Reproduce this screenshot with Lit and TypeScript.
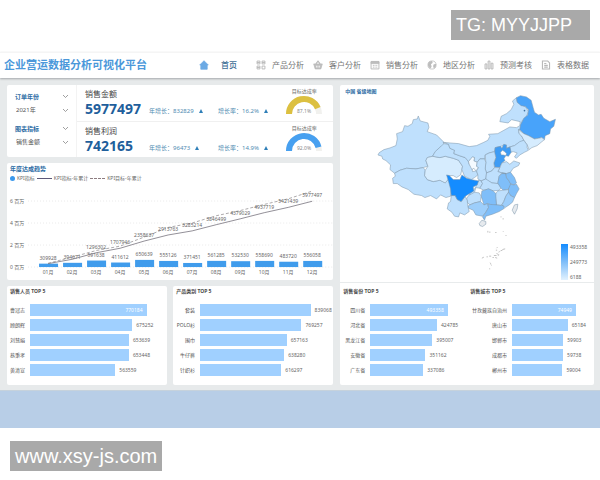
import { LitElement, html, svg, css } from "lit";
import { customElement, property } from "lit/decorators.js";

const shared = css`
  * { box-sizing: border-box; }
  h1, h2, p, ul, figure { margin: 0; padding: 0; }
  svg { display: block; }
`;

type Row = [string, number];

/* ---------- ranked horizontal bars ---------- */
@customElement("rank-bars")
export class RankBars extends LitElement {
  @property() heading = "";
  @property({ attribute: false }) rows: Row[] = [];
  @property({ type: Number }) fill = 85;
  @property({ type: Number }) labelWidth = 18;
  @property({ type: Boolean }) inside = false;

  static styles = [shared, css`
    :host { display: block; padding: 2px 0 8px; }
    h2 { font-size: 5px; line-height: 6px; font-weight: 700; color: #4a4a4a; padding-left: 3px; }
    table { width: 100%; border-collapse: collapse; margin-top: 8px; table-layout: fixed; }
    th, td { padding: 0; height: 15px; vertical-align: middle; }
    th { font-size: 5px; font-weight: 400; color: #555; text-align: right; white-space: nowrap; }
    td { padding-left: 5px; }
    .track { display: flex; align-items: center; gap: 4px; }
    .bar { height: 12px; background: #a0d0ff; flex: none; display: flex; align-items: center; justify-content: flex-end; padding-right: 4px; }
    .value { font-size: 5px; color: #666; }
    .light { color: #fff; }
  `];

  render() {
    const max = this.rows[0][1];
    return html`<h2>${this.heading}</h2>
      <table>
        <colgroup><col style="width:${this.labelWidth}px" /><col /></colgroup>
        ${this.rows.map(([name, value], i) => {
          const within = this.inside && i === 0;
          return html`<tr>
            <th scope="row">${name}</th>
            <td><div class="track">
              <div class="bar" style="width:${(value / max) * this.fill}%">
                ${within ? html`<span class="value light">${value}</span>` : ""}
              </div>
              ${within ? "" : html`<span class="value">${value}</span>`}
            </div></td>
          </tr>`;
        })}
      </table>`;
  }
}

/* ---------- semicircle gauge ---------- */
@customElement("rate-gauge")
export class RateGauge extends LitElement {
  @property({ type: Number }) rate = 0;
  @property() color = "#47a0f0";

  static styles = [shared, css`
    :host { display: block; width: 38px; text-align: center; font-size: 5px; line-height: 7px; color: #666; }
    svg { width: 38px; height: 22px; }
    text { font-size: 5px; fill: #888; }
  `];

  render() {
    const a = Math.PI * (1 - this.rate / 100);
    const x = 19 + 15 * Math.cos(a);
    const y = 19 - 15 * Math.sin(a);
    return html`<p>目标达成率</p>
      <svg viewBox="0 0 38 22">
        <path d="M4 19A15 15 0 0 1 34 19" fill="none" stroke="#f1f1ee" stroke-width="6" />
        <path d="M4 19A15 15 0 0 1 ${x} ${y}" fill="none" stroke=${this.color} stroke-width="6" />
        <text x="19" y="18" text-anchor="middle">${this.rate.toFixed(1)}%</text>
      </svg>`;
  }
}

/* ---------- yearly trend ---------- */
const MONTHLY = [309928, 384743, 591638, 411612, 650639, 555126, 371451, 561285, 532530, 558690, 483720, 556058];
const BAR_LABELS = ["309928", "394671", "591638", "411612", "650639", "555126", "371451", "561285", "532530", "558690", "483720", "556058"];
const TOTALS = [309928, 704671, 1296302, 1707946, 2358637, 2913763, 3285214, 3846499, 4379029, 4937719, 5421439, 5977497];
const TARGET = [340000, 900000, 1500000, 1900000, 2720000, 3600000, 4000000, 4660000, 5130000, 5690000, 6200000, 6900000];

@customElement("trend-chart")
export class TrendChart extends LitElement {
  static styles = [shared, css`
    :host { display: block; }
    h2 { font-size: 6px; line-height: 8px; color: #2a6ba3; padding: 2px 3px 0; }
    .legend { display: flex; align-items: center; gap: 2px; padding: 2px 3px 0; font-size: 5px; line-height: 7px; color: #666; }
    .dot { width: 5px; height: 5px; border-radius: 50%; background: #3a98ec; }
    .line { width: 15px; border-top: 1px solid #5c5878; }
    .dash { border-top: 1px dashed #8c7c80; }
    .plot { width: 100%; }
    text { font-size: 5px; fill: #666; }
  `];

  render() {
    const x = (i: number) => 41 + i * 24;
    const y = (v: number) => 85 - (v / 1e6) * 11;
    const path = (vs: number[]) => vs.map((v, i) => `${i ? "L" : "M"}${x(i)} ${y(v)}`).join("");
    return html`<h2>年度达成趋势</h2>
      <div class="legend">
        <span class="dot"></span><span>KPI指标</span>
        <span class="line"></span><span>KPI指标-年累计</span>
        <span class="line dash"></span><span>KPI目标-年累计</span>
      </div>
      <svg class="plot" viewBox="0 0 326 98">
        ${[6, 4, 2, 0].map((m) => svg`
          <text x="3" y=${y(m * 1e6) + 2}>${m} 百万</text>
          <path d="M21 ${y(m * 1e6)}H325" stroke="#dcdcdc" stroke-width=".6" stroke-dasharray="1 2" />`)}
        ${MONTHLY.map((v, i) => svg`
          <rect x=${x(i) - 9} y=${y(v)} width="19" height=${85 - y(v)} fill="#409cec" />
          <text x=${x(i)} y=${y(v) - 4} text-anchor="middle">${BAR_LABELS[i]}</text>
          <text x=${x(i)} y="92" text-anchor="middle">${String(i + 1).padStart(2, "0")}月</text>`)}
        <path d=${path(TOTALS)} fill="none" stroke="#77747e" stroke-width=".8" />
        <path d=${path(TARGET)} fill="none" stroke="#8a8588" stroke-width=".7" stroke-dasharray="3 2" />
        ${TOTALS.map((v, i) => i < 2 ? "" : svg`<text x=${x(i)} y=${y(v) - 4} text-anchor="middle">${v}</text>`)}
      </svg>`;
  }
}

/* ---------- province map ---------- */
const P = "#bfe0fd", L = "#d6ecfe", M = "#9dcefb", D = "#7fbef9";
const PROVINCES: [string, string][] = [
  [P, "114,228 118,221 132,212 150,207 168,200 172,180 170,164 188,158 194,140 204,142 217,134 220,122 232,120 235,111 241,126 264,132 267,145 262,158 290,168 310,188 312,200 300,205 286,218 278,232 262,236 258,245 264,262 250,266 228,270 200,268 180,274 164,283 150,272 152,258 138,245 128,240 126,232"],
  [P, "164,283 180,274 200,268 228,270 250,266 256,274 254,290 262,302 280,308 300,304 316,312 326,300 328,308 334,330 332,352 318,356 302,348 290,360 272,350 255,356 245,350 222,346 205,332 186,324 172,314 160,314 158,298 166,292"],
  [L, "262,236 278,232 300,236 316,232 340,238 356,244 368,262 366,272 362,288 350,296 340,290 326,290 326,300 316,312 300,304 280,308 262,302 254,290 256,274 264,262 258,245"],
  [P, "278,232 286,218 300,205 312,194 326,196 330,208 344,214 342,224 358,230 376,236 384,244 388,256 396,266 398,278 410,276 414,288 404,296 394,302 382,296 374,292 366,272 368,262 356,244 340,238 316,232 300,236"],
  [P, "310,190 330,192 356,194 388,203 410,200 432,190 444,184 450,172 446,166 474,164 492,154 510,144 530,146 540,140 541,128 515,122 505,132 480,128 484,112 500,104 514,92 522,76 518,66 530,56 532,68 545,78 558,84 566,98 560,112 548,124 544,138 540,152 536,152 538,164 546,172 552,184 540,190 524,200 510,204 500,208 492,198 484,202 466,206 464,218 448,222 436,228 434,240 420,240 412,250 402,246 404,236 398,234 386,248 376,236 358,230 342,224 344,214 330,208 326,196"],
  ["#f4faff", "392,240 398,234 404,236 402,246 412,250 410,262 416,266 408,276 402,268 396,272 388,256 386,248"],
  ["#48a3fa", "530,56 542,50 560,54 574,64 580,86 584,100 596,108 604,106 612,118 630,128 647,121 642,142 632,150 630,164 616,170 614,182 606,176 596,178 584,180 566,170 552,164 540,152 542,138 552,118 564,108 566,92 556,82 544,80 532,70"],
  [L, "536,152 552,164 566,170 584,180 596,178 606,176 614,182 604,190 592,200 576,206 568,212 562,198 552,184 546,172 538,164"],
  [P, "510,204 524,200 540,188 552,184 562,198 562,206 566,214 554,220 540,228 530,238 524,234 532,222 520,218 512,220"],
  ["#3e9cf5", "466,206 482,202 486,208 492,196 500,198 500,208 510,204 514,220 506,232 498,230 492,240 496,244 486,252 480,266 464,264 462,252 468,236 464,222"],
  ["#fff", "482,220 488,214 494,218 500,224 498,230 490,228 484,228"],
  [P, "436,228 448,222 464,218 468,236 462,252 464,266 456,276 440,282 436,270 438,250"],
  [P, "434,240 438,250 436,270 440,282 438,300 424,306 414,300 414,288 410,276 416,266 410,262 412,250 420,240"],
  [P, "480,266 486,252 500,248 510,256 522,246 540,252 536,260 520,268 512,280 500,284 486,282 474,278"],
  [P, "440,282 456,276 464,266 480,266 474,278 486,282 478,292 474,314 456,312 444,306 438,300"],
  [P, "416,304 424,306 428,314 420,328 408,326 404,340 396,352 388,346 400,336 410,320"],
  [P, "424,306 438,300 456,312 474,314 484,326 478,334 460,336 446,330 432,334 420,328 428,314"],
  [D, "478,292 486,284 498,284 500,296 508,306 514,318 506,332 490,334 482,326 474,312"],
  [D, "486,282 500,284 512,280 524,296 530,312 522,318 512,314 506,304 500,296 498,284"],
  [D, "512,316 522,318 530,316 538,330 530,344 524,356 512,350 506,340 506,330"],
  [P, "474,336 490,334 506,332 506,340 498,352 492,368 484,380 470,378 468,360 466,346"],
  [M, "506,340 512,350 524,356 518,370 508,378 496,386 486,378 492,368 498,352"],
  [D, "426,336 446,330 460,336 468,344 468,360 470,378 458,380 444,374 432,378 428,364 424,352"],
  [P, "386,350 404,340 418,342 424,352 422,368 404,372 390,378 382,370 380,360"],
  [M, "390,378 404,372 422,368 432,378 444,374 446,386 438,400 428,412 408,408 400,394 386,388 384,382"],
  [D, "446,386 444,376 470,378 490,380 494,388 478,398 458,406 438,412 434,424 428,414 438,400"],
  [P, "334,350 346,350 352,362 364,368 376,352 382,364 384,382 388,398 374,408 360,402 356,414 344,412 336,400 322,390 326,372 332,368"],
  ["#148cff", "320,288 328,290 340,302 360,302 366,288 380,298 394,302 416,306 412,318 400,324 402,336 386,346 376,352 364,368 352,362 346,350 334,350 332,330 326,308"],
  ["#e6eaee", "418,434 426,424 438,428 438,436 428,443 420,440"],
  ["#e6eaee", "524,378 534,376 532,390 524,406 517,394"],
];
const ISLETS = "M482 414h3M488 420h4M444 456v5M450 458v4M466 461h4M489 458h2M497 470h3M470 508l3-3M468 514h4M476 520l4-2M488 512l8-2M482 516l6-2M470 524l6 3M462 530h8M448 532h6M440 534h4M426 538l6-3M458 536h4M466 536l6 2M474 530l4-2M450 552l4 3M453 557l2 3M448 570h3";

@customElement("china-map")
export class ChinaMap extends LitElement {
  static styles = [shared, css`
    :host { display: block; position: relative; padding-top: 2px; }
    h2 { font-size: 5px; line-height: 8px; color: #2a6ba3; padding-left: 5px; }
    .map { width: 100%; }
    .scale { position: absolute; right: 6px; bottom: 1px; display: flex; gap: 2px; font-size: 5px; line-height: 6px; color: #666; }
    .ramp { width: 7px; height: 36px; background: linear-gradient(#148cff, #7fbef9 50%, #e2f2ff); }
    .ticks { display: flex; flex-direction: column; justify-content: space-between; width: 18px; }
  `];
  render() {
    return html`<h2>中国 省级地图</h2>
      <svg class="map" viewBox="0 48 762 558" role="img" aria-label="中国省级地图">
        <g stroke="#7f97ab" stroke-width="1.6" stroke-linejoin="round">
          ${PROVINCES.map(([f, pts]) => svg`<polygon fill=${f} points=${pts} />`)}
        </g>
        <circle cx="554" cy="95" r="2.5" fill="#3d6f9c" />
        <path d=${ISLETS} stroke="#999" stroke-width="1.8" fill="none" />
      </svg>
      <div class="scale">
        <div class="ramp"></div>
        <div class="ticks"><span>493358</span><span>249773</span><span>6188</span></div>
      </div>`;
  }
}

/* ---------- page ---------- */
const ICONS: Record<string, unknown> = {
  home: svg`<path fill="#6ba9e4" d="M7 1L13 7H11.500V13H2.500V7H1Z" stroke="#6ba9e4" stroke-linejoin="round"/>`,
  grid: svg`<path stroke-width="1.300" d="M1.500 1.500h4v4h-4zM8.500 1.500h4v4h-4zM1.500 8.500h4v4h-4zM8.500 8.500h4v4h-4zM1.500 3.500h4M8.500 3.500h4M1.500 10.500h4"/>`,
  basket: svg`<path fill="#c0c0c0" d="M1 5.500H13L11 12.500H3Z"/><path stroke-width="1.500" d="M4 5.500L7 1.500L10 5.500"/><path stroke="#fff" d="M5 8v2.500M7 8v2.500M9 8v2.500"/>`,
  calendar: svg`<path stroke-width="1.300" d="M1.500 2.500h11v10h-11z"/><path fill="#bdbdbd" d="M1.500 2h11v3h-11z"/><path stroke-width="1.300" d="M4 7.500h1.500M6.300 7.500h1.500M8.700 7.500h1.500M4 10h1.500M6.300 10h1.500M8.700 10h1.500"/>`,
  globe: svg`<circle cx="7" cy="7" r="5.700"/><path fill="#bdbdbd" stroke="none" d="M2 4Q4 1 7 1.500L8 4L5.500 6L6.500 9L5 12Q1 10 1.300 6ZM9.500 6L13 5.500Q13 10 9.500 12L8.500 8.500Z"/>`,
  bars: svg`<path stroke-width="1.400" d="M1.500 5.500h2.500v7h-2.500zM5.800 1.500h2.500v11h-2.500zM10 4.500h2.500v8h-2.500z"/>`,
  sheet: svg`<path stroke-width="1.500" d="M2 1.500h7.500l2.500 2.500v8.500h-10zM4.500 5h3M4.500 7.500h5M4.500 10h5"/>`,
};
const NAV: [string, string][] = [
  ["grid", "产品分析"], ["basket", "客户分析"], ["calendar", "销售分析"],
  ["globe", "地区分析"], ["bars", "预测考核"], ["sheet", "表格数据"],
];
const icon = (name: string) => html`<svg class="icon" viewBox="0 0 14 14" fill="none" stroke="#b8b8b8">${ICONS[name]}</svg>`;
const chevron = html`<svg class="chevron" viewBox="0 0 7 5" fill="none" stroke="#777" stroke-width=".7"><path d="M1 1L3.500 3.500L6 1" /></svg>`;

@customElement("app-root")
export class AppRoot extends LitElement {
  static styles = [shared, css`
    :host { display: block; background: #fff; color: #555; font-family: "Noto Sans", "Noto Sans CJK SC", sans-serif; }
    .mark { display: flex; width: fit-content; height: 30px; align-items: center; padding: 0 5px; background: #a9a9a9; color: #fff; font: 20px/30px "Liberation Sans", Arial, sans-serif; }
    .top { display: flex; justify-content: flex-end; padding: 10px 10px 12px; }
    .top .mark { font-size: 18px; width: 139px; }
    .foot { padding: 13px 10px 10px; }
    header { position: relative; display: flex; align-items: center; justify-content: space-between; height: 26px; padding: 0 11px 2px 4px; border-top: 1px solid #f5f5f5; background: #fff; box-shadow: 0 1px 2px #a4a8aa; }
    h1 { font-size: 11px; line-height: 16px; font-weight: 700; color: #4b98da; white-space: nowrap; }
    nav { display: flex; gap: 9px; }
    nav a { display: flex; align-items: center; gap: 6px; font-size: 8px; line-height: 12px; color: #757575; text-decoration: none; white-space: nowrap; }
    nav a.current { gap: 12px; color: #3f6f96; font-weight: 500; margin-right: 10px; }
    .icon { width: 10px; height: 10px; }
    main { display: grid; grid-template-columns: 9fr 7fr; gap: 7px; padding: 7px 6px 5px 7px; background: #e7eaeb; }
    .left { display: flex; flex-direction: column; gap: 6px; min-width: 0; }
    .panel { background: #fff; border-radius: 2px; min-width: 0; }
    .kpis { display: grid; grid-template-columns: 70px 1fr; }
    .filters { display: flex; flex-direction: column; padding: 4px 7px 0 8px; border-right: 1px solid #f3f3f3; }
    .filters label { display: flex; justify-content: space-between; align-items: center; height: 14px; font-size: 6px; font-weight: 700; color: #2a6ba3; }
    .pick { display: grid; align-items: center; height: 14px; margin-bottom: 4px; }
    .pick > * { grid-area: 1 / 1; }
    .pick .chevron { justify-self: end; }
    select { appearance: none; border: 0; background: none; padding: 0 1px; margin: 0; width: 100%; font: 6px/10px "Noto Sans", "Noto Sans CJK SC", sans-serif; color: #555; }
    .chevron { width: 7px; height: 5px; pointer-events: none; }
    .kpi { display: grid; grid-template-columns: 64px 69px 1fr 38px; height: 36px; padding: 3px 10px 0 8px; align-items: start; }
    .kpi + .kpi { border-top: 1px solid #f0f0f0; }
    .name { font-size: 8px; line-height: 12px; color: #444; }
    .total { font-size: 14px; line-height: 18px; font-weight: 700; color: #1f5f9c; }
    .growth { display: flex; align-items: center; gap: 5px; font-size: 6px; line-height: 8px; color: #4f8cb2; margin-top: 19px; white-space: nowrap; }
    .up { width: 4px; height: 4px; }
    .pair { display: grid; grid-template-columns: 1fr 1fr; gap: 6px; }
    .wide { display: flex; flex-direction: column; justify-content: space-between; }
    .regions { display: grid; grid-template-columns: 1fr 1fr; border-top: 1px solid #e8ebec; padding-top: 3px; }
    .strip { height: 38px; background: #b8cee7; border-top: 1px solid #c6d2dc; }
  `];

  kpi(name: string, total: number, inc: number, rate: string, done: number, color: string) {
    const up = html`<svg class="up" viewBox="0 0 4 4"><path d="M2 0L4 4H0Z" fill="#2f7fb8" /></svg>`;
    return html`<section class="kpi">
      <div><p class="name">${name}</p><p class="total">${total}</p></div>
      <p class="growth">年增长：${inc} ${up}</p>
      <p class="growth">增长率：${rate} ${up}</p>
      <rate-gauge .rate=${done} .color=${color}></rate-gauge>
    </section>`;
  }

  render() {
    return html`
      <div class="top"><div class="mark">TG: MYYJJPP</div></div>
      <header>
        <h1>企业营运数据分析可视化平台</h1>
        <nav>
          <a class="current" href="#home">${icon("home")}首页</a>
          ${NAV.map(([i, t]) => html`<a href="#${i}">${icon(i)}${t}</a>`)}
        </nav>
      </header>
      <main>
        <div class="left">
          <div class="panel kpis">
            <div class="filters">
              <label for="year">订单年份 ${chevron}</label>
              <div class="pick"><select id="year"><option>2021年</option></select>${chevron}</div>
              <label for="metric">图表指标 ${chevron}</label>
              <div class="pick"><select id="metric"><option>销售金额</option></select>${chevron}</div>
            </div>
            <div>
              ${this.kpi("销售金额", 5977497, 832829, "16.2%", 87.1, "#dcc040")}
              ${this.kpi("销售利润", 742165, 96473, "14.9%", 92, "#47a0f0")}
            </div>
          </div>
          <trend-chart class="panel"></trend-chart>
          <div class="pair">
            <rank-bars class="panel" heading="销售人员 TOP 5" inside .fill=${85} .rows=${[["曹冠志", 770184], ["顾朗辉", 675252], ["刘慧娟", 653639], ["蔡秉孝", 653448], ["黄清宣", 563559]]}></rank-bars>
            <rank-bars class="panel" heading="产品类别 TOP 5" .fill=${83} .labelWidth=${22} .rows=${[["套装", 839068], ["POLO衫", 769257], ["围巾", 657163], ["牛仔裤", 638280], ["针织衫", 616297]]}></rank-bars>
          </div>
        </div>
        <div class="panel wide">
          <china-map></china-map>
          <div class="regions">
            <rank-bars heading="销售省份 TOP 5" inside .fill=${80} .labelWidth=${25} .rows=${[["四川省", 493358], ["河北省", 424785], ["黑龙江省", 395007], ["安徽省", 351162], ["广东省", 337086]]}></rank-bars>
            <rank-bars heading="销售城市 TOP 5" inside .fill=${78} .labelWidth=${40} .rows=${[["甘孜藏族自治州", 74949], ["唐山市", 65184], ["邯郸市", 59903], ["成都市", 59738], ["郴州市", 59004]]}></rank-bars>
          </div>
        </div>
      </main>
      <div class="strip"></div>
      <div class="foot"><div class="mark">www.xsy-js.com</div></div>`;
  }
}
